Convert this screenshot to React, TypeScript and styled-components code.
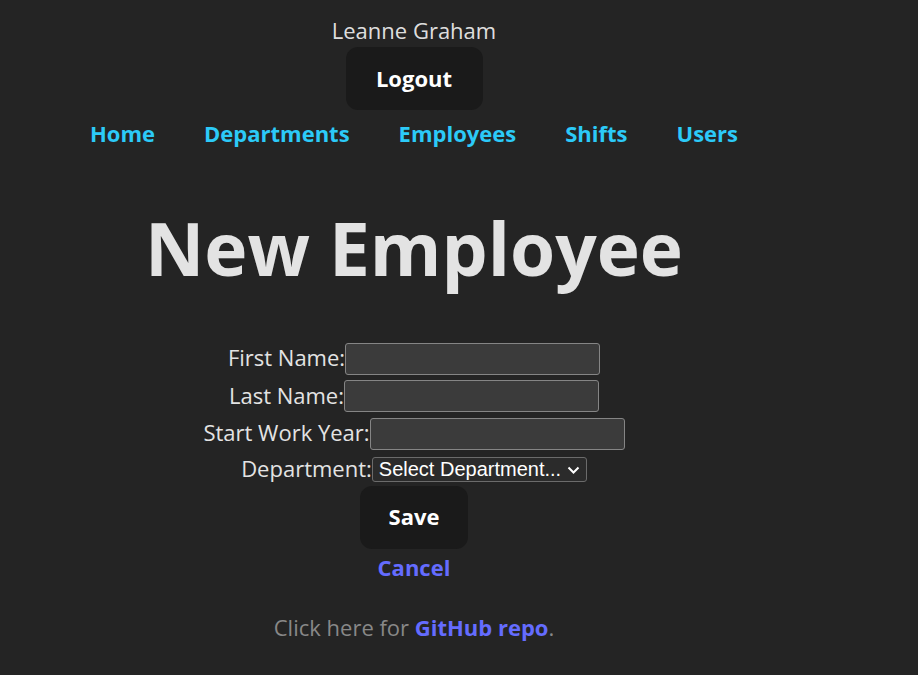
import React from "react";
import styled, { createGlobalStyle } from "styled-components";

const Global = createGlobalStyle`
  html, body { margin: 0; padding: 0; background: #242424; }
  body {
    font-family: "Open Sans", "Noto Sans", sans-serif;
    color: rgba(255,255,255,0.87);
    font-size: 22px;
    line-height: 36px;
  }
`;

const Page = styled.div`
  width: 828px;
  padding-top: 12px;
  display: flex;
  flex-direction: column;
  align-items: center;
  text-align: center;
`;

const UserName = styled.div`
  height: 36px;
  line-height: 36px;
`;

const Button = styled.button<{ $w: number }>`
  width: ${(p) => p.$w}px;
  height: 63px;
  border: 1px solid transparent;
  border-radius: 12px;
  background: #1a1a1a;
  color: #ffffff;
  font-family: inherit;
  font-size: 22px;
  font-weight: 700;
  cursor: pointer;
  padding: 0 0 2px;
`;

const LogoutButton = styled(Button)`
  margin-top: -1px;
`;

const Nav = styled.nav`
  margin-top: 5px;
  display: flex;
  gap: 49px;
  height: 36px;
  align-items: center;
`;

const NavLink = styled.a`
  color: #2ccaf8;
  font-weight: 700;
  text-decoration: none;
  font-size: 22px;
`;

const Title = styled.h1`
  margin: 55px 0 0;
  font-size: 73px;
  font-weight: 700;
  line-height: 84px;
  height: 84px;
  color: #e3e3e3;
`;

const Form = styled.form`
  margin-top: 50px;
  display: flex;
  flex-direction: column;
  align-items: center;
`;

const Row = styled.div<{ $h?: number }>`
  display: flex;
  align-items: center;
  justify-content: center;
  height: ${(p) => p.$h ?? 37.5}px;
`;

const Label = styled.label`
  font-size: 22px;
  color: #e3e3e3;
  padding-bottom: 3px;
`;

const Input = styled.input`
  box-sizing: border-box;
  display: block;
  width: 255px;
  height: 32px;
  background: #3b3b3b;
  border: 1px solid #858585;
  border-radius: 3px;
  color: #fff;
  padding: 0 3px;
  font-family: "Liberation Sans", Arial, sans-serif;
  font-size: 20px;
`;

const SelectWrap = styled.div`
  position: relative;
  width: 215px;
  height: 25px;
  line-height: 0;
`;

const Select = styled.select`
  box-sizing: border-box;
  display: block;
  appearance: none;
  width: 100%;
  height: 100%;
  background: #2b2b2b;
  border: 1px solid #6b6b6b;
  border-radius: 3px;
  color: #ffffff;
  font-family: "Liberation Sans", Arial, sans-serif;
  font-size: 20px;
  line-height: 23px;
  padding: 0 0 0 6px;
  text-align: left;
`;

const Chevron = styled.svg`
  position: absolute;
  right: 7px;
  top: 9px;
  pointer-events: none;
`;

const SaveButton = styled(Button)`
  margin-top: 0;
`;

const CancelLink = styled.a`
  margin-top: 0;
  height: 36px;
  line-height: 36px;
  color: #646cff;
  font-weight: 700;
  text-decoration: none;
  font-size: 22px;
`;

const Footer = styled.p`
  margin: 24px 0 0;
  color: #888888;
  font-size: 22px;
  line-height: 36px;
`;

const RepoLink = styled.a`
  color: #646cff;
  font-weight: 700;
  text-decoration: none;
`;

export default function App() {
  return (
    <>
      <Global />
      <Page>
        <UserName>Leanne Graham</UserName>
        <LogoutButton $w={137}>Logout</LogoutButton>
        <Nav>
          <NavLink href="#">Home</NavLink>
          <NavLink href="#">Departments</NavLink>
          <NavLink href="#">Employees</NavLink>
          <NavLink href="#">Shifts</NavLink>
          <NavLink href="#">Users</NavLink>
        </Nav>
        <Title>New Employee</Title>
        <Form onSubmit={(e) => e.preventDefault()}>
          <Row>
            <Label>First Name:</Label>
            <Input type="text" />
          </Row>
          <Row>
            <Label>Last Name:</Label>
            <Input type="text" />
          </Row>
          <Row>
            <Label>Start Work Year:</Label>
            <Input type="text" />
          </Row>
          <Row $h={33}>
            <Label>Department:</Label>
            <SelectWrap>
              <Select defaultValue="">
                <option value="">Select Department...</option>
              </Select>
              <Chevron width="13" height="9" viewBox="0 0 13 9">
                <path d="M1.5 1.5 L6.5 6.5 L11.5 1.5" fill="none" stroke="#ffffff" strokeWidth="2" />
              </Chevron>
            </SelectWrap>
          </Row>
          <SaveButton $w={108} type="submit">Save</SaveButton>
          <CancelLink href="#">Cancel</CancelLink>
        </Form>
        <Footer>
          Click here for <RepoLink href="#">GitHub repo</RepoLink>.
        </Footer>
      </Page>
    </>
  );
}
